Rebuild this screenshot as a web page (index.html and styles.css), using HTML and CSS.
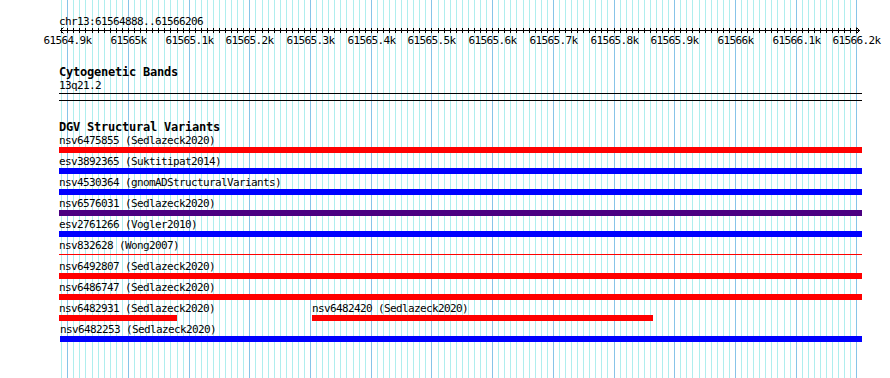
FILE: index.html
```html
<!DOCTYPE html>
<html lang="en">

<head>
    <meta charset="UTF-8">
    <meta name="viewport" content="width=device-width, initial-scale=1.0">
    <title>chr13:61564888..61566206</title>
    <link rel="stylesheet" href="styles.css">
</head>

<body>
    <div id="panel">
        <svg id="grid" width="890" height="378"></svg>

        <div id="tracks">
            <div class="region">chr13:61564888..61566206</div>
            <svg id="ruler" width="890" height="20"></svg>

            <div class="track cyto">
                <div class="track-title">Cytogenetic Bands</div>
                <div class="feature-label">13q21.2</div>
                <div class="band"></div>
            </div>

            <div class="track dgv">
                <div class="track-title">DGV Structural Variants</div>

                <div class="row">
                    <div class="feature" style="width: 803px;">
                        <div class="feature-label">nsv6475855 (Sedlazeck2020)</div>
                        <div class="bar loss"></div>
                    </div>
                </div>
                <div class="row">
                    <div class="feature" style="width: 803px;">
                        <div class="feature-label">esv3892365 (Suktitipat2014)</div>
                        <div class="bar gain"></div>
                    </div>
                </div>
                <div class="row">
                    <div class="feature" style="width: 803px;">
                        <div class="feature-label">nsv4530364 (gnomADStructuralVariants)</div>
                        <div class="bar gain"></div>
                    </div>
                </div>
                <div class="row">
                    <div class="feature" style="width: 803px;">
                        <div class="feature-label">nsv6576031 (Sedlazeck2020)</div>
                        <div class="bar both"></div>
                    </div>
                </div>
                <div class="row">
                    <div class="feature" style="width: 803px;">
                        <div class="feature-label">esv2761266 (Vogler2010)</div>
                        <div class="bar gain"></div>
                    </div>
                </div>
                <div class="row">
                    <div class="feature" style="width: 803px;">
                        <div class="feature-label">nsv832628 (Wong2007)</div>
                        <div class="bar loss thin"></div>
                    </div>
                </div>
                <div class="row">
                    <div class="feature" style="width: 803px;">
                        <div class="feature-label">nsv6492807 (Sedlazeck2020)</div>
                        <div class="bar loss"></div>
                    </div>
                </div>
                <div class="row">
                    <div class="feature" style="width: 803px;">
                        <div class="feature-label">nsv6486747 (Sedlazeck2020)</div>
                        <div class="bar loss"></div>
                    </div>
                </div>
                <div class="row">
                    <div class="feature" style="width: 118px;">
                        <div class="feature-label">nsv6482931 (Sedlazeck2020)</div>
                        <div class="bar loss"></div>
                    </div>
                    <div class="feature" style="margin-left: 135px; width: 341px;">
                        <div class="feature-label">nsv6482420 (Sedlazeck2020)</div>
                        <div class="bar loss"></div>
                    </div>
                </div>
                <div class="row">
                    <div class="feature" style="margin-left: 1px; width: 802px;">
                        <div class="feature-label">nsv6482253 (Sedlazeck2020)</div>
                        <div class="bar gain"></div>
                    </div>
                </div>
            </div>
        </div>
    </div>

    <script>
        const SVG_NS = 'http://www.w3.org/2000/svg';
        const start = 61564888;
        const end = 61566206;
        const left = 60;
        const width = 800;

        function toX(pos) {
            return Math.round(left + (pos - start) * width / (end - start));
        }

        function line(svg, x1, y1, x2, y2, cls) {
            const el = document.createElementNS(SVG_NS, 'line');
            el.setAttribute('x1', x1);
            el.setAttribute('y1', y1);
            el.setAttribute('x2', x2);
            el.setAttribute('y2', y2);
            el.setAttribute('class', cls);
            svg.appendChild(el);
        }

        function drawGrid() {
            const grid = document.getElementById('grid');
            const ruler = document.getElementById('ruler');

            // ruler axis and arrow heads
            line(ruler, left, 2.5, left + width, 2.5, 'axis');
            const arrows = document.createElementNS(SVG_NS, 'path');
            arrows.setAttribute('d', `M${left + 3.5} -0.5 L${left + 0.5} 2.5 L${left + 3.5} 5.5 M${left + width - 3.5} -0.5 L${left + width - 0.5} 2.5 L${left + width - 3.5} 5.5`);
            arrows.setAttribute('class', 'axis');
            ruler.appendChild(arrows);

            for (let pos = Math.ceil(start / 10) * 10; pos <= end; pos += 10) {
                const x = toX(pos) + 0.5;
                const major = pos % 100 === 0;
                line(grid, x, 0, x, 378, major ? 'major' : 'minor');
                line(ruler, x, 0, x, 5, 'axis');

                if (major) {
                    const label = document.createElementNS(SVG_NS, 'text');
                    label.setAttribute('x', x);
                    label.setAttribute('y', 16);
                    label.setAttribute('class', 'tick-label');
                    label.textContent = pos % 1000 === 0 ? `${pos / 1000}k` : `${(pos / 1000).toFixed(1)}k`;
                    ruler.appendChild(label);
                }
            }
        }

        drawGrid();
    </script>
</body>

</html>
```

FILE: styles.css
```css
body,
html {
    margin: 0;
    padding: 0;
    background-color: white;
    color: black;
    overflow: hidden;
}

#panel {
    position: relative;
    width: 890px;
    height: 378px;
}

#grid {
    position: absolute;
    top: 0;
    left: 0;
}

#grid .minor {
    stroke: #afeeee;
    stroke-width: 1;
}

#grid .major {
    stroke: #87c4e8;
    stroke-width: 1;
}

#tracks {
    position: relative;
    padding-top: 15px;
}

#ruler {
    display: block;
    overflow: visible;
}

#ruler .axis {
    stroke: black;
    stroke-width: 1;
    fill: none;
}

#ruler .tick-label {
    font-family: "DejaVu Sans Mono", monospace;
    font-size: 11px;
    letter-spacing: -0.62px;
    text-anchor: middle;
    fill: black;
}

.region,
.feature-label {
    font-family: "DejaVu Sans Mono", monospace;
    font-size: 11px;
    line-height: 13px;
    letter-spacing: -0.62px;
    white-space: nowrap;
}

.region {
    padding-left: 59px;
}

.track {
    padding-left: 59px;
}

.track-title {
    font-family: "DejaVu Sans Mono", monospace;
    font-weight: bold;
    font-size: 12px;
    line-height: 13px;
    letter-spacing: -0.22px;
    white-space: nowrap;
}

.cyto {
    margin-top: 18px;
}

.band {
    width: 803px;
    height: 6px;
    margin-top: 1px;
    border-top: 1px solid black;
    border-bottom: 1px solid black;
}

.dgv {
    margin-top: 20px;
}

.row {
    display: flex;
    height: 19px;
    margin-bottom: 2px;
}

.feature {
    flex: none;
    display: flex;
    flex-direction: column;
}

.bar {
    height: 6px;
}

.bar.thin {
    height: 1px;
    margin: 2px 0 3px;
}

.loss {
    background-color: #ff0000;
}

.gain {
    background-color: #0000ff;
}

.both {
    background-color: #4b0082;
}
```
